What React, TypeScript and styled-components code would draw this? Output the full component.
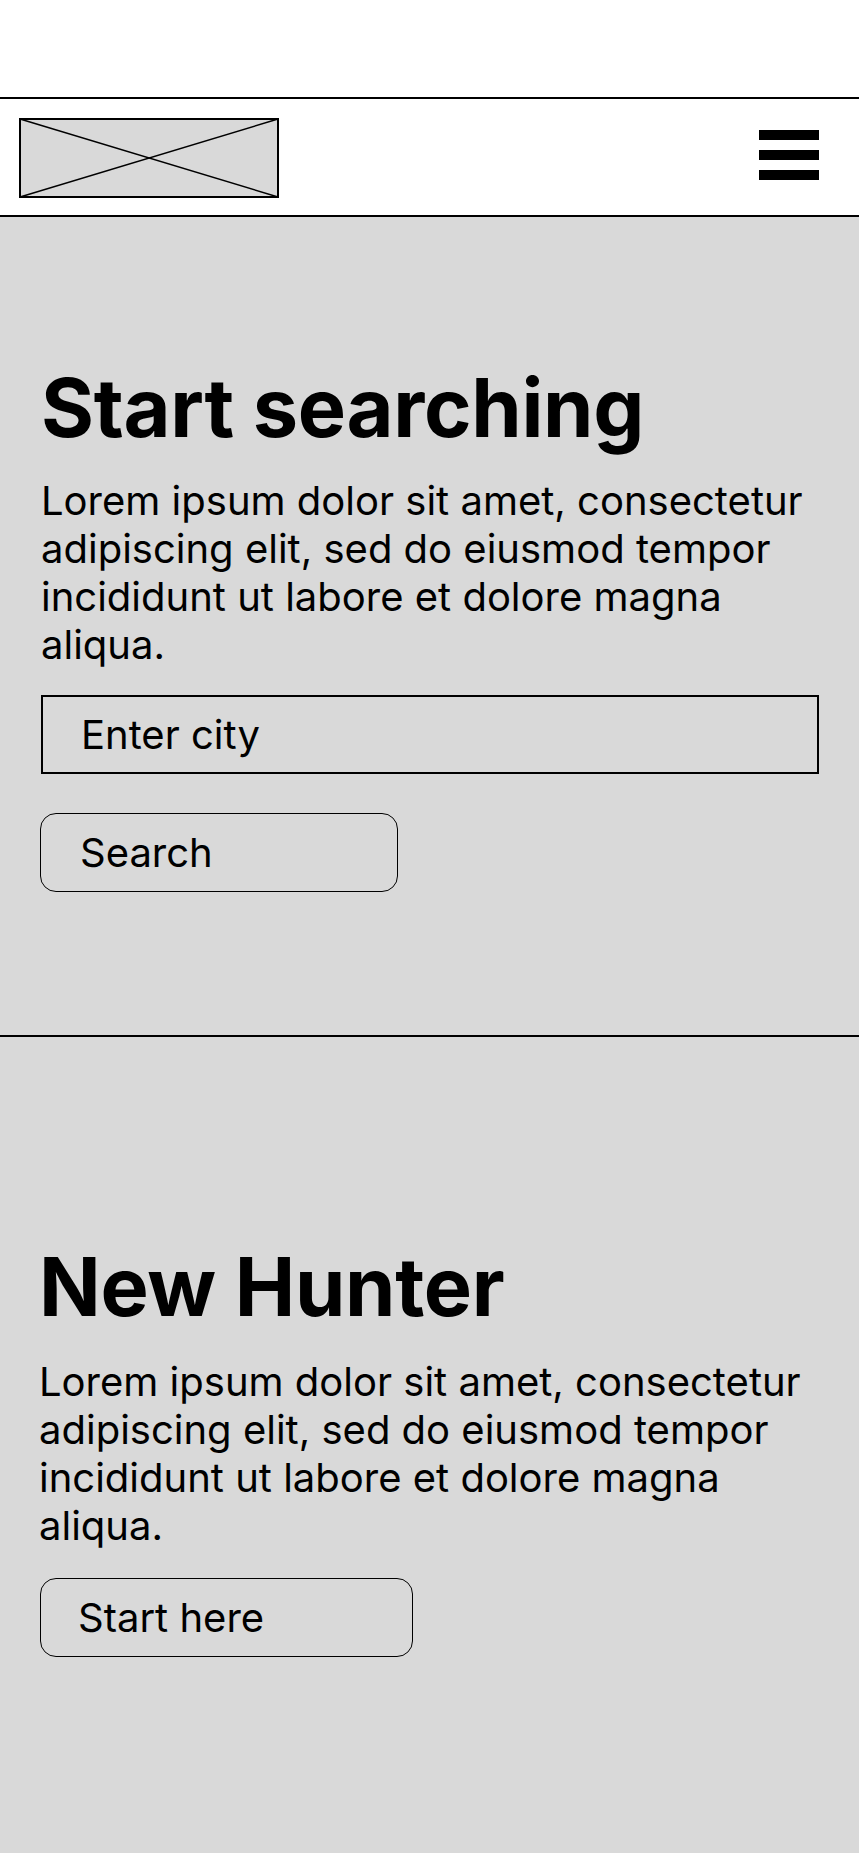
import React from "react";
import styled, { createGlobalStyle } from "styled-components";

const GlobalStyle = createGlobalStyle`
  * { box-sizing: border-box; }
  html, body { margin: 0; padding: 0; background: #d9d9d9; }
  body { font-family: Inter, "Noto Sans", Arial, sans-serif; color: #000; }
`;

const Page = styled.div`
  display: flex;
  flex-direction: column;
  width: 859px;
  min-height: 1853px;
  background: #d9d9d9;
`;

const TopSpace = styled.div`
  height: 97px;
  background: #fff;
`;

const Header = styled.header`
  display: flex;
  align-items: center;
  justify-content: space-between;
  height: 120px;
  padding: 2px 40px 0 19px;
  background: #fff;
  border-top: 2px solid #000;
  border-bottom: 2px solid #000;
`;

const Logo = styled.svg`
  display: block;
  width: 260px;
  height: 80px;
`;

const Burger = styled.button`
  display: flex;
  flex-direction: column;
  gap: 10px;
  padding: 0;
  margin-top: -6px;
  border: none;
  background: transparent;
`;

const BurgerBar = styled.span`
  display: block;
  width: 60px;
  height: 10px;
  background: #000;
`;

const Section = styled.section<{ $top: number; $bottom: number; $left: number; $divider?: boolean }>`
  display: flex;
  flex-direction: column;
  align-items: flex-start;
  padding: ${(p) => p.$top}px 40px ${(p) => p.$bottom}px ${(p) => p.$left}px;
  background: #d9d9d9;
  border-bottom: ${(p) => (p.$divider ? "2px solid #000" : "none")};
  flex: ${(p) => (p.$divider ? "none" : "1")};
`;

const Title = styled.h1<{ $gap: number }>`
  margin: 0 0 ${(p) => p.$gap}px;
  font-size: 81px;
  line-height: 96px;
  font-weight: 700;
  letter-spacing: -0.3px;
`;

const Text = styled.p<{ $gap: number }>`
  margin: 0 0 ${(p) => p.$gap}px;
  font-size: 40px;
  line-height: 48px;
  font-weight: 400;
`;

const CityInput = styled.input`
  display: block;
  width: 778px;
  height: 79px;
  margin: 0 0 39px;
  padding: 0 0 0 38px;
  border: 2px solid #000;
  border-radius: 0;
  background: transparent;
  font-family: inherit;
  font-size: 40px;
  color: #000;
  outline: none;
  &::placeholder {
    color: #000;
    opacity: 1;
  }
`;

const PillButton = styled.button<{ $width: number; $pad: number; $shift?: number }>`
  display: flex;
  align-items: center;
  width: ${(p) => p.$width}px;
  height: 79px;
  margin-left: ${(p) => p.$shift ?? 0}px;
  padding: 0 0 0 ${(p) => p.$pad}px;
  border: 1.5px solid #000;
  border-radius: 16px;
  background: transparent;
  font-family: inherit;
  font-size: 40px;
  line-height: 48px;
  color: #000;
  text-align: left;
`;

export default function App() {
  return (
    <>
      <GlobalStyle />
      <Page>
        <TopSpace />
        <Header>
          <Logo viewBox="0 0 260 80" preserveAspectRatio="none" aria-label="logo">
            <rect x="1" y="1" width="258" height="78" fill="#d9d9d9" stroke="#000" strokeWidth="2" />
            <line x1="1" y1="1" x2="259" y2="79" stroke="#000" strokeWidth="1.4" />
            <line x1="1" y1="79" x2="259" y2="1" stroke="#000" strokeWidth="1.4" />
          </Logo>
          <Burger aria-label="menu">
            <BurgerBar />
            <BurgerBar />
            <BurgerBar />
          </Burger>
        </Header>
        <Section $top={143} $bottom={143} $left={41} $divider>
          <Title $gap={21}>Start searching</Title>
          <Text $gap={26}>
            Lorem ipsum dolor sit amet, consectetur adipiscing elit, sed do eiusmod tempor incididunt ut labore et dolore
            magna aliqua.
          </Text>
          <CityInput placeholder="Enter city" />
          <PillButton $width={358} $pad={39} $shift={-1}>
            Search
          </PillButton>
        </Section>
        <Section $top={202} $bottom={197} $left={39}>
          <Title $gap={23}>New Hunter</Title>
          <Text $gap={28}>
            Lorem ipsum dolor sit amet, consectetur adipiscing elit, sed do eiusmod tempor incididunt ut labore et dolore
            magna aliqua.
          </Text>
          <PillButton $width={373} $pad={37} $shift={1}>
            Start here
          </PillButton>
        </Section>
      </Page>
    </>
  );
}
